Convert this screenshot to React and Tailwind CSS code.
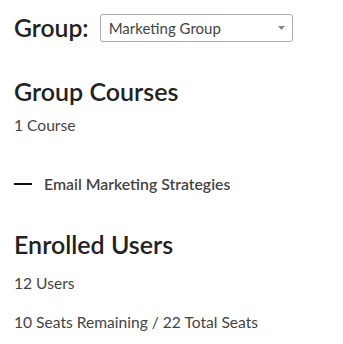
const App = () => {
  return (
    <div
      className="min-h-screen bg-white pl-[14px] pt-[14px] text-[#444]"
      style={{ fontFamily: "Lato, 'Open Sans', sans-serif" }}
    >
      {/* Group picker */}
      <div className="flex h-[28px] items-center">
        <span className="text-[24.7px] font-semibold leading-[30px] text-[#222]">
          Group:
        </span>
        <div className="ml-[11px] flex h-[28px] w-[193px] items-center justify-between rounded-[3px] border border-[#aaa] pl-[8px] pr-[7px]">
          <span className="text-[15px] leading-[20px] text-[#444]">
            Marketing Group
          </span>
          <svg width="7" height="4" viewBox="0 0 7 4">
            <path d="M0 0h7L3.5 4z" fill="#888" />
          </svg>
        </div>
      </div>

      {/* Courses */}
      <h2 className="mt-[34px] text-[25px] font-semibold leading-[30px] text-[#222]">
        Group Courses
      </h2>
      <p className="mt-[9px] text-[15.6px] leading-[20px]">1 Course</p>

      <div className="mt-[39px] flex items-center">
        <span className="h-[2px] w-[18px] bg-[#111]" />
        <span className="ml-[12px] text-[15.8px] font-semibold leading-[20px] text-[#444]">
          Email Marketing Strategies
        </span>
      </div>

      {/* Users */}
      <h2 className="mt-[35px] text-[25px] font-semibold leading-[30px] text-[#222]">
        Enrolled Users
      </h2>
      <p className="mt-[14px] text-[15.6px] leading-[20px]">12 Users</p>
      <p className="mt-[19px] text-[15.6px] leading-[20px]">
        10 Seats Remaining / 22 Total Seats
      </p>
    </div>
  );
};

export default App;
